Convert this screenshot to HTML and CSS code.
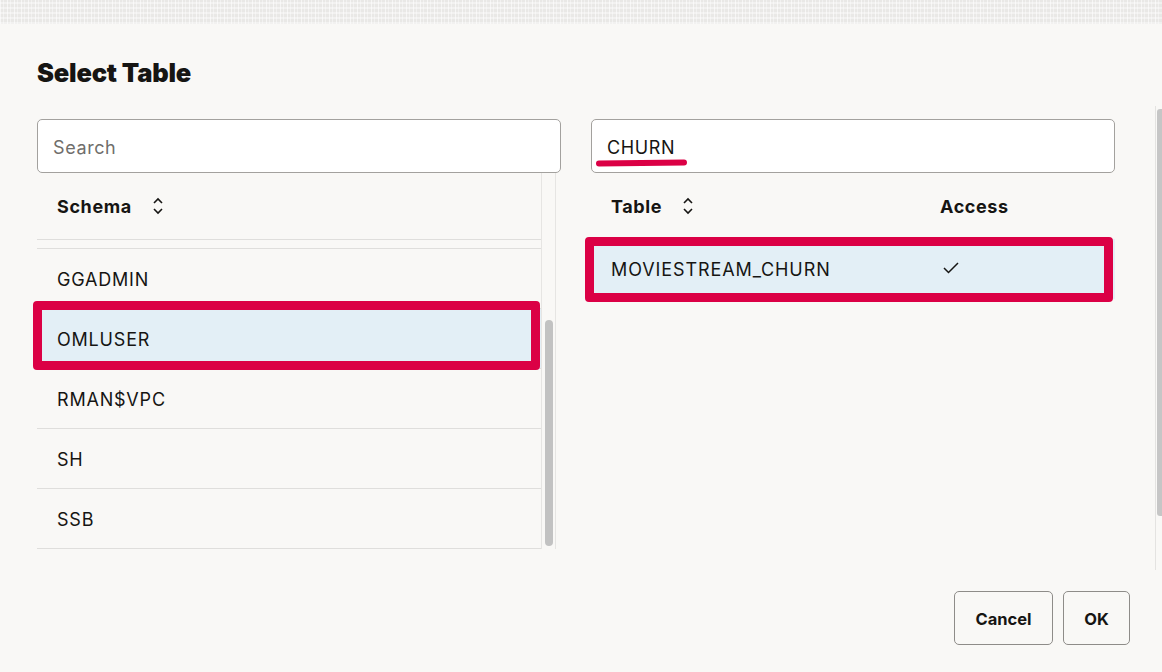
FILE: index.html
```html
<!DOCTYPE html>
<html lang="en">
<head>
<meta charset="utf-8">
<title>Select Table</title>
<link rel="stylesheet" href="styles.css">
</head>
<body>
<div class="band"></div>
<div class="dialog">
  <div class="content">
    <h1 class="title">Select Table</h1>
    <div class="panes">
      <div class="pane">
        <div class="field"><span class="placeholder">Search</span></div>
        <div class="list">
          <div class="rows">
            <div class="head"><span class="hlabel">Schema</span>
              <svg class="sort" width="10" height="18" viewBox="0 0 10 18"><path d="M1 6 L5 2 L9 6 M1 12 L5 16 L9 12" fill="none" stroke="#161513" stroke-width="1.6"/></svg>
            </div>
            <div class="partial"></div>
            <div class="row">GGADMIN</div>
            <div class="row selected">OMLUSER<span class="mark mark-left"></span></div>
            <div class="row">RMAN$VPC</div>
            <div class="row">SH</div>
            <div class="row">SSB</div>
          </div>
          <div class="track"><div class="thumb"></div></div>
        </div>
      </div>
      <div class="pane">
        <div class="field"><span class="value">CHURN</span><span class="underline"></span></div>
        <div class="table">
          <div class="thead">
            <div class="c1"><span class="hlabel">Table</span>
              <svg class="sort" width="10" height="18" viewBox="0 0 10 18"><path d="M1 6 L5 2 L9 6 M1 12 L5 16 L9 12" fill="none" stroke="#161513" stroke-width="1.6"/></svg>
            </div>
            <div class="c2"><span class="hlabel">Access</span></div>
          </div>
          <div class="trow selected">
            <div class="c1">MOVIESTREAM_CHURN</div>
            <div class="c2"><svg width="16" height="12" viewBox="0 0 16 12"><path d="M1 6 L5.5 10.5 L15 1" fill="none" stroke="#161513" stroke-width="1.5"/></svg></div>
            <span class="mark mark-right"></span>
          </div>
        </div>
      </div>
    </div>
    <div class="actions">
      <button class="btn btn-cancel">Cancel</button>
      <button class="btn btn-ok">OK</button>
    </div>
  </div>
  <div class="pagescroll"><div class="pthumb"></div></div>
</div>
</body>
</html>
```

FILE: styles.css
```css
* { box-sizing: border-box; }
html, body { margin: 0; padding: 0; }
body {
  background: #f9f8f6;
  font-family: Inter, "Noto Sans", "Liberation Sans", sans-serif;
  color: #161513;
  width: 1162px;
  height: 672px;
  overflow: hidden;
}
.band {
  height: 24px;
  background-color: #e9e8e6;
  background-image:
    repeating-linear-gradient(90deg, rgba(255,255,255,0.6) 0 1px, transparent 1px 3px, rgba(255,255,255,0.4) 3px 4px, transparent 4px 7px),
    repeating-linear-gradient(0deg, rgba(255,255,255,0.4) 0 2px, transparent 2px 5px);
}
.dialog {
  display: flex;
  height: 648px;
}
.content {
  flex: 1;
  padding: 33px 0 0 37px;
  display: flex;
  flex-direction: column;
}
.title {
  margin: 0;
  font-size: 25.5px;
  line-height: 32px;
  font-weight: 900;
  letter-spacing: -0.2px;
  color: #161513;
}
.panes {
  margin-top: 30px;
  display: grid;
  grid-template-columns: 524px 524px;
  column-gap: 30px;
}
.field {
  position: relative;
  height: 54px;
  background: #fff;
  border: 1px solid #a3a19e;
  border-radius: 5px;
  display: flex;
  align-items: center;
  padding: 2px 0 0 15px;
  font-size: 18px;
  letter-spacing: 0.6px;
}
.placeholder { color: #6f6e6b; }
.value { color: #161513; }
.underline {
  position: absolute;
  left: 4px;
  top: 40px;
  width: 91px;
  height: 6px;
  border-radius: 3px;
  background: #db0045;
  transform: rotate(-0.6deg);
}
.list {
  display: flex;
  width: 519px;
  height: 376px;
}
.rows {
  width: 504px;
  position: relative;
}
.head {
  height: 67px;
  border-bottom: 1px solid #dfdedc;
  display: flex;
  align-items: center;
  padding: 1px 0 0 20px;
  gap: 21px;
}
.hlabel {
  font-size: 18px;
  font-weight: 700;
  letter-spacing: 0.6px;
}
.sort { display: block; margin-top: -2px; }
.partial {
  height: 9px;
  border-bottom: 1px solid #dfdedc;
}
.row {
  position: relative;
  height: 60px;
  border-bottom: 1px solid #dfdedc;
  display: flex;
  align-items: center;
  padding: 2px 0 0 20px;
  font-size: 18px;
  letter-spacing: 0.8px;
}
.row.selected { background: #e3eff6; }
.mark {
  position: absolute;
  border: 9px solid #db0045;
  border-radius: 4px;
  pointer-events: none;
}
.mark-left { left: -4px; right: 1px; top: -8px; bottom: -2px; }
.track {
  width: 15px;
  border-left: 1px solid #e6e5e3;
  border-right: 1px solid #e6e5e3;
  position: relative;
  display: flex;
  justify-content: center;
  padding-top: 147px;
}
.thumb {
  width: 8px;
  height: 226px;
  background: #c2c2c2;
  border-radius: 4px;
}
.table { width: 524px; }
.thead {
  height: 66px;
  display: flex;
  align-items: center;
  padding-top: 1px;
}
.c1 {
  width: 329px;
  padding-left: 20px;
  display: flex;
  align-items: center;
  gap: 21px;
}
.c2 {
  padding-left: 20px;
  display: flex;
  align-items: center;
}
.trow {
  position: relative;
  height: 60px;
  display: flex;
  align-items: center;
  padding-top: 1px;
  font-size: 18px;
  letter-spacing: 0.9px;
}
.trow .c2 svg { margin-left: 3px; margin-top: -3px; }
.trow.selected { background: #e3eff6; }
.mark-right { left: -6px; right: 2px; top: -2px; bottom: -3px; }
.actions {
  margin-top: 42px;
  width: 1093px;
  display: flex;
  justify-content: flex-end;
  gap: 10px;
}
.btn {
  height: 54px;
  padding: 2px 0 0;
  background: #f9f8f6;
  border: 1px solid #8e8c89;
  border-radius: 5px;
  font-family: Inter, "Noto Sans", "Liberation Sans", sans-serif;
  font-size: 16.5px;
  font-weight: 700;
  color: #161513;
  text-align: center;
}
.btn-cancel { width: 99px; }
.btn-ok { width: 67px; }
.pagescroll {
  width: 7px;
  margin-top: 82px;
  height: 464px;
  border-left: 1px solid #e4e3e1;
  padding: 3px 0 0 1px;
}
.pthumb {
  height: 407px;
  background: #c6c6c6;
  border-radius: 3px 0 0 3px;
}
```
